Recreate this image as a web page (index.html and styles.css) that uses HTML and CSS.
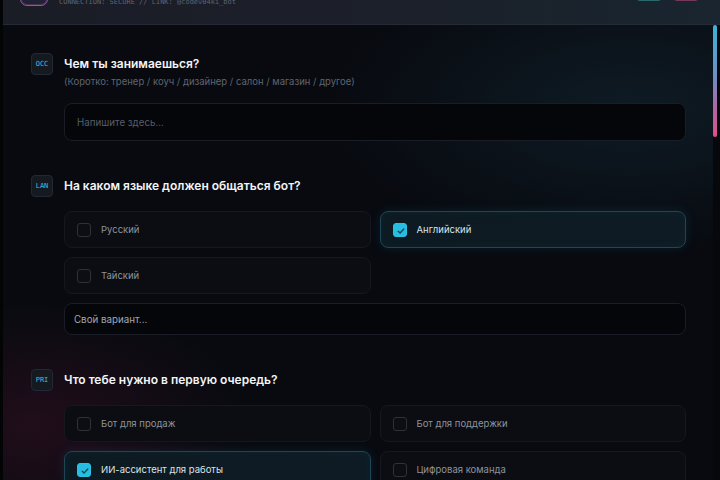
FILE: index.html
```html
<!DOCTYPE html>
<html lang="ru">
<head>
<meta charset="utf-8">
<title>Бриф</title>
<link rel="stylesheet" href="styles.css">
</head>
<body>
<div class="app">
  <header class="topbar">
    <div class="brand">
      <div class="logo"></div>
      <div class="brand-sub">CONNECTION: SECURE // LINK: @codev04ki_bot</div>
    </div>
    <div class="actions">
      <button class="act act-teal" type="button"></button>
      <button class="act act-pink" type="button"></button>
    </div>
  </header>

  <div class="shell">
    <main class="scroll">
      <form class="brief">
        <section class="q">
          <div class="q-head">
            <span class="tag">OCC</span>
            <h2 class="q-title">Чем ты занимаешься?</h2>
          </div>
          <div class="q-body">
            <p class="q-hint">(Коротко: тренер / коуч / дизайнер / салон / магазин / другое)</p>
            <input class="field" type="text" placeholder="Напишите здесь...">
          </div>
        </section>

        <section class="q">
          <div class="q-head">
            <span class="tag">LAN</span>
            <h2 class="q-title">На каком языке должен общаться бот?</h2>
          </div>
          <div class="q-body">
            <div class="opts">
              <label class="opt"><span class="box"></span>Русский</label>
              <label class="opt is-on"><span class="box"><svg viewBox="0 0 14 14"><path d="M4.2 7.2l1.9 1.9 3.7-4"/></svg></span>Английский</label>
              <label class="opt"><span class="box"></span>Тайский</label>
            </div>
            <input class="field field-sm" type="text" placeholder="Свой вариант...">
          </div>
        </section>

        <section class="q">
          <div class="q-head">
            <span class="tag">PRI</span>
            <h2 class="q-title">Что тебе нужно в первую очередь?</h2>
          </div>
          <div class="q-body">
            <div class="opts">
              <label class="opt"><span class="box"></span>Бот для продаж</label>
              <label class="opt"><span class="box"></span>Бот для поддержки</label>
              <label class="opt is-on"><span class="box"><svg viewBox="0 0 14 14"><path d="M4.2 7.2l1.9 1.9 3.7-4"/></svg></span>ИИ-ассистент для работы</label>
              <label class="opt"><span class="box"></span>Цифровая команда</label>
            </div>
          </div>
        </section>
      </form>
    </main>
    <!-- scroll position indicator -->
    <div class="rail"><div class="thumb"></div></div>
  </div>
</div>
</body>
</html>
```

FILE: styles.css
```css
* { box-sizing: border-box; }

html, body {
  margin: 0;
  height: 100%;
  background: #030406;
  overflow: hidden;
}

body {
  font-family: Inter, "Noto Sans", sans-serif;
  color: #e8ecf1;
}

.app {
  height: 100vh;
  display: flex;
  flex-direction: column;
  border-left: 3px solid #030406;
}

/* top bar */
.topbar {
  flex: none;
  height: 25px;
  display: flex;
  align-items: flex-end;
  justify-content: space-between;
  padding: 0 20px 0 17px;
  overflow: hidden;
  background: linear-gradient(90deg, #1a1d26 0%, #1c1f29 45%, #19252f 100%);
  border-bottom: 1px solid #262a34;
}

.brand {
  display: flex;
  align-items: flex-end;
  gap: 11px;
}

.logo {
  width: 28px;
  height: 28px;
  margin-bottom: 18px;
  border-radius: 7px;
  border: 1.5px solid #8a5aa8;
  background: #1f2233;
  box-shadow: inset 0 0 0 1px rgba(214, 90, 160, 0.25);
}

.brand-sub {
  margin-bottom: 17px;
  font-family: "DejaVu Sans Mono", monospace;
  font-size: 7px;
  line-height: 9px;
  color: #5d6471;
}

.actions {
  display: flex;
  align-items: flex-end;
  gap: 9px;
}

.act {
  width: 28px;
  height: 24px;
  margin-bottom: 23px;
  border-radius: 5px;
  padding: 0;
  background: transparent;
}

.act-teal { border: 1px solid #2a6a6e; background: rgba(40, 120, 125, 0.15); }
.act-pink { border: 1px solid #74385a; background: rgba(140, 50, 100, 0.15); }

/* form area + scroll indicator */
.shell {
  flex: 1;
  min-height: 0;
  display: flex;
}

.scroll {
  flex: 1;
  min-width: 0;
  overflow-y: auto;
  scrollbar-width: none;
  background:
    radial-gradient(ellipse 60% 45% at 88% 18%, rgba(22, 48, 62, 0.45), transparent 70%),
    radial-gradient(ellipse 45% 40% at 4% 88%, rgba(62, 18, 40, 0.45), transparent 70%),
    #080a10;
}

.rail {
  flex: none;
  width: 7px;
  padding: 0 3px 0 0;
  background: #06080c;
}

.thumb {
  width: 4px;
  height: 112px;
  border-radius: 2px;
  background: linear-gradient(180deg, #38b6da 0%, #6e8fc4 45%, #b164a6 75%, #e04f8e 100%);
}

.brief {
  padding: 28px 27px 40px 28px;
  display: flex;
  flex-direction: column;
  gap: 34px;
}

/* question block */
.q-head {
  display: flex;
  align-items: center;
  gap: 11px;
}

.tag {
  flex: none;
  width: 22px;
  height: 22px;
  display: grid;
  place-items: center;
  border-radius: 4px;
  background: #151920;
  border: 1px solid #232832;
  font-family: "DejaVu Sans Mono", monospace;
  font-size: 7px;
  color: #38c2e0;
}

.q-title {
  margin: 0;
  font-size: 12px;
  line-height: 22px;
  font-weight: 600;
  color: #f2f4f7;
}

.q-body {
  margin-left: 33px;
  display: flex;
  flex-direction: column;
  gap: 9px;
}

.q-hint {
  margin: 0;
  font-size: 9.5px;
  line-height: 14px;
  color: #5f6571;
}

.field {
  display: block;
  width: 100%;
  height: 38px;
  margin-top: 5px;
  padding: 0 12px;
  border-radius: 8px;
  border: 1px solid #1a1d25;
  background: #05060a;
  font-family: inherit;
  font-size: 9.75px;
  color: #cfd4db;
  outline: none;
}

.field::placeholder { color: #585e69; }

.field-sm {
  height: 32px;
  margin-top: 0;
  padding: 0 9px;
}

.field-sm::placeholder { color: #a2a7b0; }

.opts {
  margin-top: 14px;
  display: grid;
  grid-template-columns: 1fr 1fr;
  gap: 9px;
}

.opt {
  height: 37px;
  display: flex;
  align-items: center;
  gap: 10px;
  padding: 0 12px;
  border-radius: 8px;
  border: 1px solid #15181f;
  background: #0b0d12;
  font-size: 9.5px;
  color: #8e939c;
}

.box {
  flex: none;
  width: 14px;
  height: 14px;
  border-radius: 3px;
  border: 1px solid #2c313a;
  background: #0c0e13;
  display: grid;
  place-items: center;
}

.box svg {
  width: 14px;
  height: 14px;
  fill: none;
  stroke: #0d4a5c;
  stroke-width: 1.4;
  stroke-linecap: round;
  stroke-linejoin: round;
}

.opt.is-on {
  border-color: #1f4654;
  background: linear-gradient(90deg, #0d1a22, #0e1b24);
  box-shadow: 0 0 12px rgba(40, 170, 210, 0.12), inset 0 0 10px rgba(40, 170, 210, 0.05);
  color: #dbe4ea;
}

.opt.is-on .box {
  border-color: #2cc0e2;
  background: #26bde0;
}
```
